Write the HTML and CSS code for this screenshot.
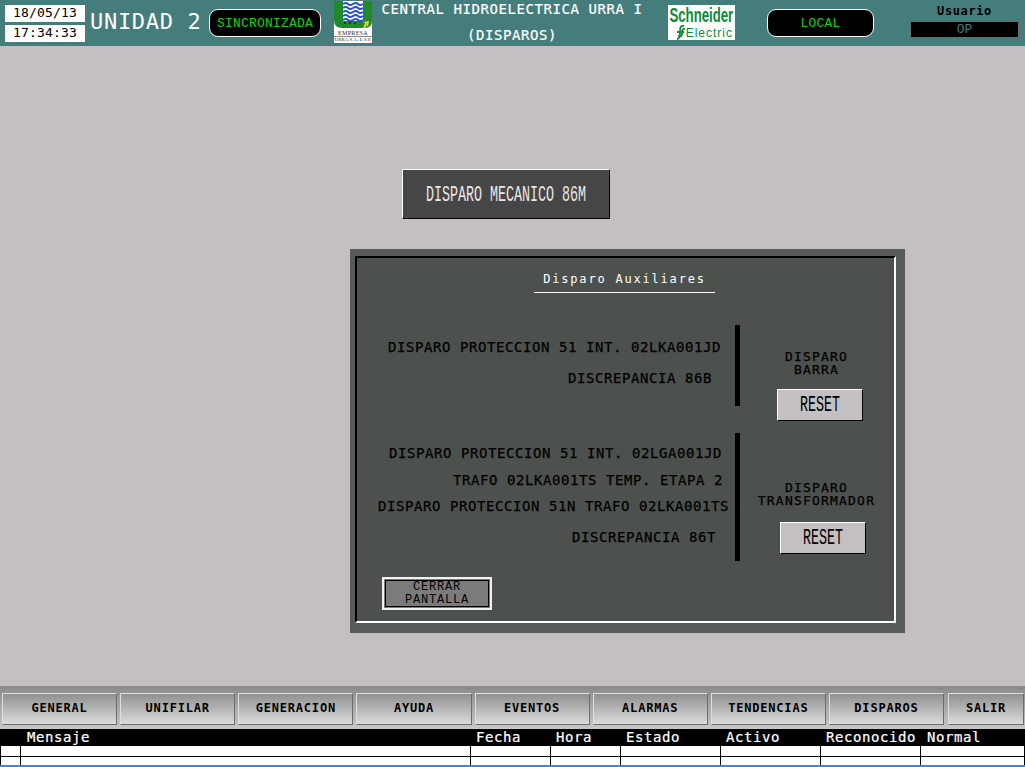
FILE: index.html
```html
<!DOCTYPE html>
<html lang="en">
<head>
    <meta charset="UTF-8">
    <meta name="viewport" content="width=device-width, initial-scale=1.0">
    <title>Disparos</title>
    <link rel="stylesheet" href="styles.css">
</head>
<body>
    <header class="topbar">
        <div class="clock">
            <div class="clock-box">18/05/13</div>
            <div class="clock-box">17:34:33</div>
        </div>
        <div class="unit">UNIDAD 2</div>
        <div class="pill pill-sync">SINCRONIZADA</div>
        <div class="urra-logo">
            <svg class="urra-mark" width="38" height="29" viewBox="0 0 38 29">
                <path d="M0 0H38V20Q38 27 31 27H8Q0 27 0 19Z" fill="#1f8a2c"/>
                <rect x="9" y="0" width="20" height="20" fill="#fff"/>
                <path d="M9 3q3-2 5 0t5 0t5 0t5 0M9 7q3-2 5 0t5 0t5 0t5 0M9 11q3-2 5 0t5 0t5 0t5 0M9 15q3-2 5 0t5 0t5 0t5 0M9 19q3-2 5 0t5 0t5 0t5 0" fill="none" stroke="#2a4fd0" stroke-width="2"/>
                <path d="M29 27l2-5-2-1 6-1-1 6-1-2-2 3z" fill="#d8d030"/>
                <path d="M10 22h2M15 22h2M20 22h2" stroke="#123" stroke-width="1.4"/>
            </svg>
            <div class="urra-text urra-text-top">EMPRESA</div>
            <div class="urra-text urra-text-low">URRA S.A. E.S.P.</div>
        </div>
        <div class="plant">
            <div>CENTRAL HIDROELECTRICA URRA I</div>
            <div>(DISPAROS)</div>
        </div>
        <div class="schneider">
            <div class="schneider-name"><span>Schneider</span></div>
            <div class="schneider-sub">
                <svg width="11" height="15" viewBox="0 0 11 15">
                    <path d="M9 1C5 0 5 4 5 7S5 14 2 14M10 4C7 3 7 7 7 8S7 13 3 11M2 7H9" fill="none" stroke="#0d8a3a" stroke-width="1.8"/>
                </svg>
                <span>Electric</span>
            </div>
        </div>
        <div class="pill pill-local">LOCAL</div>
        <div class="user">
            <div class="user-label">Usuario</div>
            <div class="user-value">OP</div>
        </div>
    </header>

    <main class="canvas">
        <div class="mech-trip"><span class="tall">DISPARO MECANICO 86M</span></div>

        <section class="panel">
            <div class="panel-inner">
                <h2 class="panel-title">Disparo Auxiliares</h2>

                <div class="group group-bar">
                    <div class="trip-list">
                        <div class="trip trip-a">DISPARO PROTECCION 51 INT. 02LKA001JD</div>
                        <div class="trip trip-b">DISCREPANCIA 86B</div>
                    </div>
                    <div class="group-side">
                        <div class="side-label">DISPARO<br>BARRA</div>
                        <button class="reset" type="button"><span class="tall">RESET</span></button>
                    </div>
                </div>

                <div class="group group-trafo">
                    <div class="trip-list">
                        <div class="trip trip-c">DISPARO PROTECCION 51 INT. 02LGA001JD</div>
                        <div class="trip trip-d">TRAFO 02LKA001TS TEMP. ETAPA 2</div>
                        <div class="trip trip-e">DISPARO PROTECCION 51N TRAFO 02LKA001TS</div>
                        <div class="trip trip-f">DISCREPANCIA 86T</div>
                    </div>
                    <div class="group-side">
                        <div class="side-label">DISPARO<br>TRANSFORMADOR</div>
                        <button class="reset" type="button"><span class="tall">RESET</span></button>
                    </div>
                </div>

                <button class="close-btn" type="button">CERRAR<br>PANTALLA</button>
            </div>
        </section>
    </main>

    <nav class="toolbar">
        <button class="nav-btn" type="button">GENERAL</button>
        <button class="nav-btn" type="button">UNIFILAR</button>
        <button class="nav-btn" type="button">GENERACION</button>
        <button class="nav-btn" type="button">AYUDA</button>
        <button class="nav-btn" type="button">EVENTOS</button>
        <button class="nav-btn" type="button">ALARMAS</button>
        <button class="nav-btn" type="button">TENDENCIAS</button>
        <button class="nav-btn" type="button">DISPAROS</button>
        <button class="nav-btn nav-exit" type="button">SALIR</button>
    </nav>

    <div class="alarms">
        <div class="alarm-row alarm-head">
            <div></div>
            <div>Mensaje</div>
            <div>Fecha</div>
            <div>Hora</div>
            <div>Estado</div>
            <div>Activo</div>
            <div>Reconocido</div>
            <div>Normal</div>
        </div>
        <div class="alarm-row alarm-cells">
            <div></div><div></div><div></div><div></div><div></div><div></div><div></div><div></div>
        </div>
        <div class="alarm-row alarm-cells alarm-last">
            <div></div><div></div><div></div><div></div><div></div><div></div><div></div><div></div>
        </div>
    </div>
</body>
</html>
```

FILE: styles.css
```css
* {
    box-sizing: border-box;
}
html, body {
    height: 100%;
}
body {
    margin: 0;
    display: flex;
    flex-direction: column;
    overflow: hidden;
    background-color: #c4bfc3;
    font-family: "DejaVu Sans Mono", "Liberation Mono", monospace;
    font-size: 14px;
    letter-spacing: .57px;
    color: #000;
}
button {
    font-family: inherit;
    margin: 0;
    padding: 0;
}

/* top bar */
.topbar {
    display: flex;
    height: 46px;
    flex: none;
    background-color: #457d7d;
}
.clock {
    margin: 5px 0 0 5px;
    width: 80px;
}
.clock-box {
    height: 17px;
    margin-bottom: 3px;
    background-color: #fff;
    text-align: center;
    font-size: 13px;
    line-height: 16px;
    letter-spacing: .2px;
}
.unit {
    margin: 9px 0 0 5px;
    width: 119px;
    font-size: 22px;
    line-height: 26px;
    letter-spacing: .7px;
    color: #fff;
    white-space: pre;
}
.pill {
    margin-top: 9px;
    height: 28px;
    background-color: #000;
    border: 1px solid #fff;
    border-radius: 9px;
    color: #10d010;
    font-family: "Liberation Mono", monospace;
    font-size: 13px;
    letter-spacing: .2px;
    line-height: 27px;
    text-align: center;
}
.pill-sync {
    width: 112px;
}
.pill-local {
    width: 107px;
    margin-left: 32px;
}
.urra-logo {
    width: 38px;
    height: 42px;
    margin: 1px 0 0 13px;
    background-color: #fff;
    overflow: hidden;
}
.urra-mark {
    display: block;
}
.urra-text {
    font-family: "Liberation Serif", serif;
    line-height: 6px;
    letter-spacing: 0;
    text-align: center;
    color: #333;
    white-space: nowrap;
}
.urra-text-top {
    font-size: 6px;
    letter-spacing: .3px;
}
.urra-text-low {
    font-size: 5px;
    border-top: 1px solid #888;
}
.plant {
    width: 278px;
    margin-left: 1px;
    padding-top: 2px;
    color: #fff;
    text-align: center;
    line-height: 15px;
    -webkit-text-stroke: .2px;
}
.plant div:last-child {
    margin: 11px 0 0 0;
}
.schneider {
    width: 67px;
    height: 35px;
    margin: 5px 0 0 17px;
    background-color: #fff;
    color: #0d8a3a;
    font-family: "Liberation Sans", sans-serif;
    letter-spacing: 0;
    overflow: hidden;
}
.schneider-name {
    display: flex;
    justify-content: center;
    font-size: 20px;
    line-height: 20px;
    font-weight: 700;
}
.schneider-name span {
    flex: none;
    transform: scaleX(.66);
}
.schneider-sub {
    display: flex;
    justify-content: flex-end;
    align-items: center;
    padding-right: 2px;
    font-size: 12px;
    line-height: 14px;
    letter-spacing: 1px;
}
.user {
    width: 109px;
    margin: 5px 0 0 36px;
    text-align: center;
}
.user-label {
    font-weight: 700;
    font-size: 12px;
    line-height: 13px;
    letter-spacing: .6px;
    margin-bottom: 3px;
}
.user-value {
    height: 17px;
    background-color: #000;
    border: 1px solid #6b6b6b;
    color: #457d7d;
    font-family: "Liberation Mono", monospace;
    font-size: 13px;
    line-height: 15px;
    letter-spacing: 0;
}

/* main area */
.canvas {
    flex: 1;
    padding: 123px 0 0 350px;
}
.mech-trip {
    display: flex;
    justify-content: center;
    align-items: center;
    width: 208px;
    height: 50px;
    margin-left: 52px;
    padding-top: 3px;
    background-color: #464646;
    border: 1px solid;
    border-color: #fff #000 #000 #fff;
    color: #e8e8e8;
}
/* tall narrow lettering of the HMI buttons */
.tall {
    display: inline-block;
    flex: none;
    font-family: "Liberation Mono", monospace;
    font-size: 22px;
    line-height: 24px;
    letter-spacing: 0;
    white-space: nowrap;
    transform: scaleX(.606);
}
.panel {
    width: 555px;
    height: 384px;
    margin-top: 30px;
    padding: 7px 9px 10px 5px;
    background-color: #565b57;
}
.panel-inner {
    height: 100%;
    background-color: #4c514d;
    border: 2px solid;
    border-color: #000 #fff #fff #000;
}
.panel-title {
    width: 181px;
    margin: 0 0 32px 177px;
    padding: 13px 0 5px;
    border-bottom: 1px solid #fff;
    color: #fff;
    font-size: 12px;
    font-weight: 400;
    letter-spacing: 1.8px;
    line-height: 16px;
    text-align: center;
}
.group {
    display: flex;
}
.group-bar {
    height: 81px;
    margin-bottom: 27px;
}
.group-trafo {
    height: 128px;
    margin-bottom: 16px;
}
.trip-list {
    width: 383px;
    flex: none;
    border-right: 5px solid #000;
    text-align: right;
    line-height: 16px;
    white-space: nowrap;
    -webkit-text-stroke: .25px;
}
.trip-a { margin: 14px 14px 0 0; }
.trip-b { margin: 15px 23px 0 0; }
.trip-c { margin: 12px 13px 0 0; }
.trip-d { margin: 11px 12px 0 0; }
.trip-e { margin: 10px 6px 0 0; }
.trip-f { margin: 15px 19px 0 0; }

.group-side {
    width: 153px;
    text-align: center;
}
.side-label {
    font-size: 13px;
    letter-spacing: 1.2px;
    line-height: 13px;
    -webkit-text-stroke: .25px;
}
.group-bar .side-label {
    margin-top: 25px;
}
.group-trafo .side-label {
    margin-top: 48px;
}
.reset {
    display: flex;
    justify-content: center;
    align-items: center;
    width: 86px;
    height: 32px;
    padding-top: 2px;
    background-color: #c4bfc3;
    border: 1px solid;
    border-color: #fff #000 #000 #fff;
    color: #000;
}
.group-bar .reset {
    margin: 13px 0 0 37px;
}
.group-trafo .reset {
    margin: 15px 0 0 40px;
}
.close-btn {
    display: block;
    width: 110px;
    height: 33px;
    margin-left: 25px;
    background-color: #7b7b7b;
    border: 2px solid #f0f0f0;
    outline: 1px solid #000;
    outline-offset: -4px;
    color: #000;
    font-family: "Liberation Mono", monospace;
    font-size: 12px;
    letter-spacing: .8px;
    line-height: 13px;
}

/* bottom nav */
.toolbar {
    display: flex;
    flex: none;
    gap: 3px;
    height: 43px;
    padding: 7px 1px 0 2px;
    background: linear-gradient(#8a8a8a, #c8c8c8);
}
.nav-btn {
    flex: 1;
    height: 32px;
    padding-bottom: 2px;
    background: linear-gradient(#909090, #dcdcdc);
    border: 1px solid;
    border-color: #dedede #6c6c6c #6c6c6c #dedede;
    color: #000;
    font-size: 12px;
    font-weight: 700;
    letter-spacing: .8px;
}
.nav-exit {
    flex: none;
    width: 76px;
    margin-left: 1px;
}

/* alarm table */
.alarms {
    flex: none;
    height: 38px;
    background-color: #000;
    border-bottom: 2px solid #3a86d8;
}
.alarm-row {
    display: grid;
    grid-template-columns: 20px 450px 80px 70px 100px 100px 100px 1fr;
    column-gap: 0;
}
.alarm-head {
    height: 17px;
    color: #fff;
    line-height: 16px;
    -webkit-text-stroke: .2px;
}
.alarm-head div {
    padding-left: 6px;
}
.alarm-head div:nth-child(2),
.alarm-head div:last-child {
    padding-left: 7px;
}
.alarm-cells {
    height: 11px;
    padding-bottom: 1px;
}
.alarm-last {
    height: 8px;
    padding-bottom: 0;
}
.alarm-cells div {
    margin-left: 1px;
    background-color: #fff;
}
.alarm-cells div:last-child {
    margin-right: 1px;
}
```
